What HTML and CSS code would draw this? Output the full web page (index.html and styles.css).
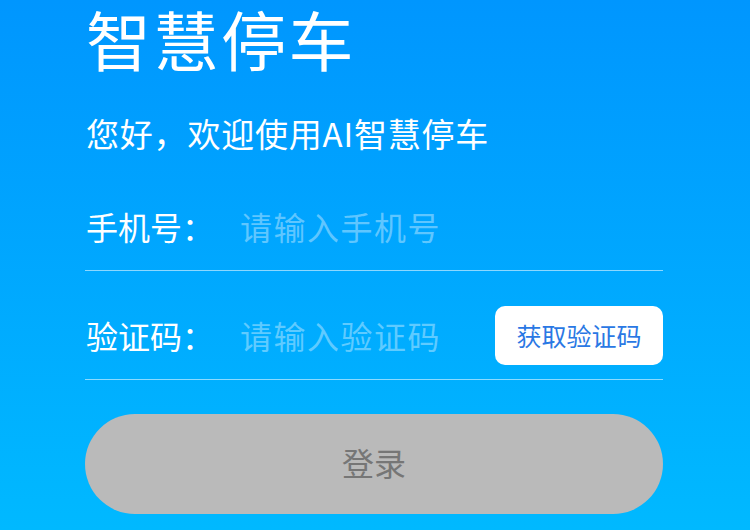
FILE: index.html
```html
<!DOCTYPE html>
<html lang="zh-CN">
<head>
<meta charset="utf-8">
<title>智慧停车</title>
<link rel="stylesheet" href="styles.css">
</head>
<body>
<div class="page">
  <h1 class="title">智慧停车</h1>
  <p class="subtitle">您好，欢迎使用AI智慧停车</p>
  <div class="field">
    <label class="label">手机号：</label>
    <input class="input" type="text" placeholder="请输入手机号">
  </div>
  <div class="field">
    <label class="label">验证码：</label>
    <input class="input" type="text" placeholder="请输入验证码">
    <button class="code-btn" type="button">获取验证码</button>
  </div>
  <button class="login" type="button">登录</button>
</div>
</body>
</html>
```

FILE: styles.css
```css
html, body {
  margin: 0;
  padding: 0;
  height: 100%;
}
body {
  background: linear-gradient(to bottom, #0096fe 0%, #00b9ff 100%);
  font-family: "Noto Sans CJK SC", "Noto Sans", sans-serif;
  color: #ffffff;
  overflow: hidden;
}
.page {
  display: flex;
  flex-direction: column;
  padding: 0 87px 0 85px;
}
.title {
  margin: 0;
  font-size: 65px;
  line-height: 76px;
  font-weight: 400;
  letter-spacing: 2.5px;
  padding-left: 1px;
}
.subtitle {
  margin: 33px 0 5px 0;
  font-size: 33px;
  line-height: 48px;
  letter-spacing: 0.8px;
  padding-left: 1px;
}
.field {
  display: flex;
  align-items: center;
  height: 88px;
  padding-top: 20px;
  border-bottom: 1px solid rgba(255, 255, 255, 0.55);
}
.label {
  width: 154px;
  flex: none;
  font-size: 32px;
  padding-left: 1px;
}
.input {
  flex: 1;
  min-width: 0;
  border: none;
  outline: none;
  background: transparent;
  font-family: inherit;
  font-size: 32px;
  color: #ffffff;
  padding: 0;
  letter-spacing: 1.5px;
}
.input::placeholder {
  color: rgba(255, 255, 255, 0.38);
}
.code-btn {
  flex: none;
  width: 168px;
  height: 59px;
  border: none;
  border-radius: 10px;
  background: #ffffff;
  color: #2a78e4;
  font-family: inherit;
  font-size: 25px;
  padding: 0;
}
.login {
  margin-top: 34px;
  height: 100px;
  border: none;
  border-radius: 50px;
  background: #bababa;
  color: #767676;
  font-family: inherit;
  font-size: 32px;
  padding: 0 0 5px 0;
}
```
